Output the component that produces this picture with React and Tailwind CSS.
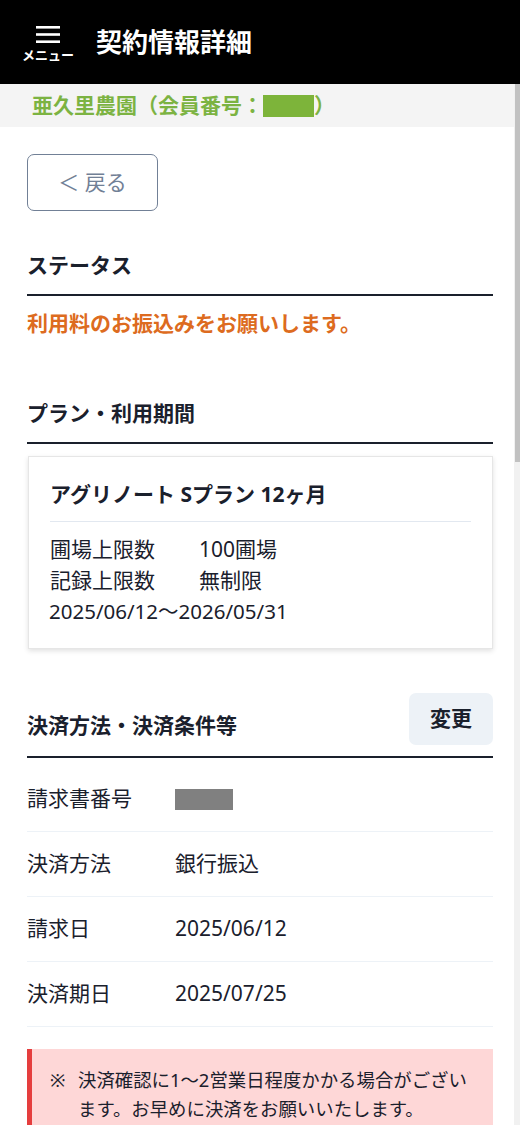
import React from 'react'

const font = { fontFamily: '"Noto Sans", "Noto Sans CJK JP", sans-serif' }

function SectionTitle({ children, className = 'mt-[39px]' }) {
  return (
    <div className={`${className} border-b-2 border-[#1a202c] pb-[14px]`}>
      <h2 className="text-[21px] font-bold leading-[30px] text-[#1a202c]">{children}</h2>
    </div>
  )
}

function InfoRow({ label, children }) {
  return (
    <div className="flex h-[65px] items-center border-b border-[#edf2f7] text-[21px] text-[#1a202c]">
      <div className="w-[148px] shrink-0">{label}</div>
      <div>{children}</div>
    </div>
  )
}

export default function App() {
  return (
    <div style={font} className="flex h-[1125px] flex-col overflow-hidden bg-white">
      <header className="flex h-[84px] shrink-0 items-center bg-black text-white">
        <button className="flex w-[52px] flex-col items-center ml-[22px] pt-[4px]">
          <svg width="24" height="17" viewBox="0 0 24 17">
            <rect x="0" y="0" width="24" height="2.6" fill="white" />
            <rect x="0" y="7.2" width="24" height="2.6" fill="white" />
            <rect x="0" y="14.4" width="24" height="2.6" fill="white" />
          </svg>
          <span className="mt-[5px] text-[13px] font-bold leading-[14px]">メニュー</span>
        </button>
        <h1 className="ml-[22px] text-[26px] font-bold leading-none">契約情報詳細</h1>
      </header>

      <div className="flex min-h-0 flex-1">
        <div className="min-w-0 flex-1 overflow-hidden">
          <div className="flex h-[43px] items-center bg-[#f4f4f4] pl-[32px] text-[21px] font-bold text-[#7cb342]">
            <span>亜久里農園（会員番号：</span>
            <span className="inline-block h-[22px] w-[51px] bg-[#7db43a]" />
            <span>）</span>
          </div>

          <main className="pl-[27px] pr-[21px]">
            <button className="mt-[27px] flex h-[57px] w-[131px] items-center justify-center rounded-[7px] border border-[#718096] text-[21px] text-[#718096]">
              ＜ 戻る
            </button>

            <SectionTitle>ステータス</SectionTitle>
            <p className="mt-[12px] text-[21px] font-bold leading-[30px] text-[#dd6b20]">
              利用料のお振込みをお願いします。
            </p>

            <SectionTitle className="mt-[60px]">プラン・利用期間</SectionTitle>

            <div className="mt-[12px] ml-[1px] border border-[#e6e6e6] px-[21px] pt-[22px] pb-[21px] shadow-[0_2px_5px_rgba(0,0,0,0.12)]">
              <h3 className="text-[21px] font-bold leading-[30px] text-[#1a202c]">
                アグリノート Sプラン 12ヶ月
              </h3>
              <div className="mt-[12px] border-t border-[#e2e8f0]" />
              <div className="mt-[12px] text-[21px] leading-[31px] text-[#1a202c]">
                <div className="flex">
                  <span className="w-[149px]">圃場上限数</span>
                  <span>100圃場</span>
                </div>
                <div className="flex">
                  <span className="w-[149px]">記録上限数</span>
                  <span>無制限</span>
                </div>
                <div className="-ml-[1px] text-[20.5px]">2025/06/12〜2026/05/31</div>
              </div>
            </div>

            <div className="mt-[44px] flex items-end justify-between border-b-2 border-[#1a202c] pb-[11px]">
              <h2 className="mb-[5px] text-[21px] font-bold leading-[30px] text-[#1a202c]">
                決済方法・決済条件等
              </h2>
              <button className="flex h-[52px] w-[84px] items-center justify-center rounded-[7px] bg-[#edf2f7] text-[21px] font-bold text-[#1a202c]">
                変更
              </button>
            </div>

            <div className="mt-[9px]">
              <InfoRow label="請求書番号">
                <span className="block h-[21px] w-[58px] bg-[#808080]" />
              </InfoRow>
              <InfoRow label="決済方法">銀行振込</InfoRow>
              <InfoRow label="請求日">2025/06/12</InfoRow>
              <InfoRow label="決済期日">2025/07/25</InfoRow>
            </div>

            <div className="mt-[22px] border-l-[5px] border-[#e53e3e] bg-[#fed7d7] pt-[16px] pb-[16px] pl-[18px] pr-[20px] text-[18.4px] leading-[29px] text-[#1a202c]">
              <div className="flex">
                <span className="w-[28px] shrink-0">※</span>
                <span>決済確認に1〜2営業日程度かかる場合がございます。お早めに決済をお願いいたします。</span>
              </div>
              <div className="flex">
                <span className="w-[28px] shrink-0">※</span>
                <span>期限までに決済の確認ができない場合、ご利用を停止させていただく場合がございます。</span>
              </div>
            </div>
          </main>
        </div>

        <div className="w-[6px] shrink-0 bg-[#f1f1f1]">
          <div className="ml-[1px] h-[378px] bg-[#c1c1c1]" />
        </div>
      </div>
    </div>
  )
}
